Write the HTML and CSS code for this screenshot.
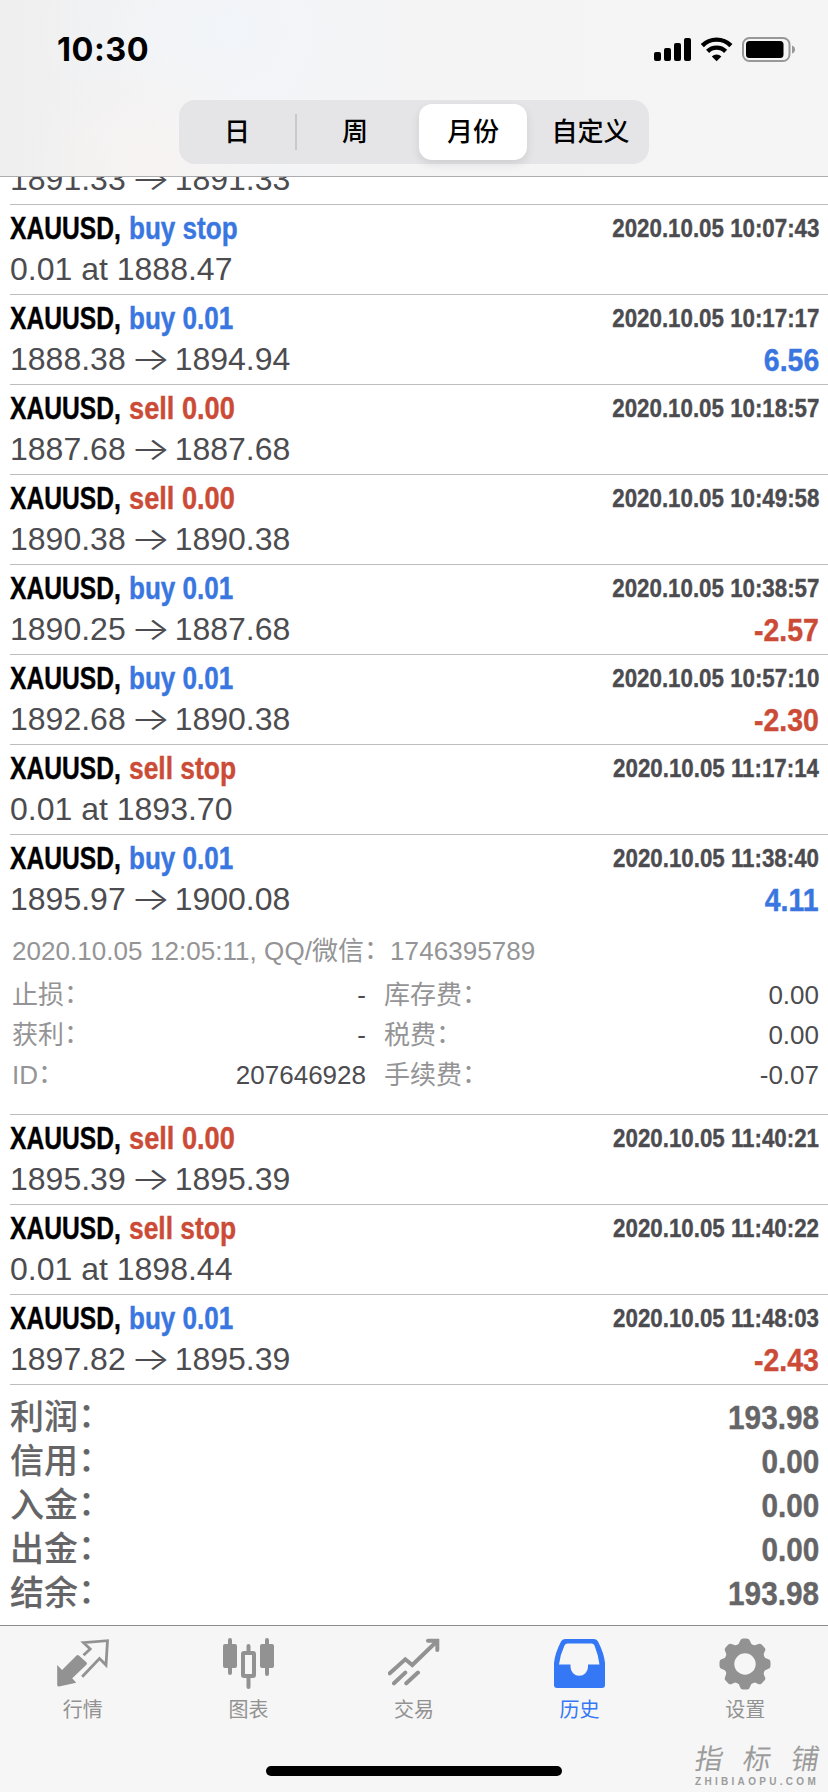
FILE: index.html
```html
<!DOCTYPE html>
<html lang="zh-CN">
<head>
<meta charset="utf-8">
<title>历史</title>
<link rel="stylesheet" href="styles.css">
</head>
<body>
<div class="screen">
  <header class="header">
    <div class="status">
      <span class="clock">10:30</span>
      <svg class="status-icons" width="142" height="26" viewBox="0 0 142 26">
        <rect x="0" y="15" width="7" height="9" rx="2"/>
        <rect x="10" y="11" width="7" height="13" rx="2"/>
        <rect x="20" y="6" width="7" height="18" rx="2"/>
        <rect x="30" y="1" width="7" height="23" rx="2"/>
        <g fill="none" stroke="#000" stroke-width="4.4">
          <path d="M48.3 8.6a20.2 20.2 0 0 1 28.6 0"/>
          <path d="M53.6 14.4a12.6 12.6 0 0 1 18 0"/>
        </g>
        <path d="M57.8 19.4a6.800 6.800 0 0 1 9.600 0l-4.800 4.800z"/>
        <rect x="89" y="1" width="46.500" height="23" rx="6.500" fill="none" stroke="#98989a" stroke-width="2"/>
        <rect x="92" y="4" width="37.500" height="17" rx="3.500"/>
        <path d="M138 8.500q3 1 3 4t-3 4z" fill="#98989a"/>
      </svg>
    </div>
    <div class="segments">
      <span class="segment segment-first">日</span>
      <span class="segment segment-ruled">周</span>
      <span class="segment segment-on">月份</span>
      <span class="segment segment-last">自定义</span>
    </div>
  </header>

  <main class="list">
    <div class="row row-cut"><div class="line line-price"><span class="price">1891.33<i class="arrow">→</i>1891.33</span></div></div>
    <div class="row"><div class="line"><b class="name">XAUUSD,</b><b class="side buy">buy stop</b><b class="time">2020.10.05 10:07:43</b></div><div class="line line-price"><span class="price">0.01 at 1888.47</span></div></div>
    <div class="row"><div class="line"><b class="name">XAUUSD,</b><b class="side buy">buy 0.01</b><b class="time">2020.10.05 10:17:17</b></div><div class="line line-price"><span class="price">1888.38<i class="arrow">→</i>1894.94</span><b class="profit buy">6.56</b></div></div>
    <div class="row"><div class="line"><b class="name">XAUUSD,</b><b class="side sell">sell 0.00</b><b class="time">2020.10.05 10:18:57</b></div><div class="line line-price"><span class="price">1887.68<i class="arrow">→</i>1887.68</span></div></div>
    <div class="row"><div class="line"><b class="name">XAUUSD,</b><b class="side sell">sell 0.00</b><b class="time">2020.10.05 10:49:58</b></div><div class="line line-price"><span class="price">1890.38<i class="arrow">→</i>1890.38</span></div></div>
    <div class="row"><div class="line"><b class="name">XAUUSD,</b><b class="side buy">buy 0.01</b><b class="time">2020.10.05 10:38:57</b></div><div class="line line-price"><span class="price">1890.25<i class="arrow">→</i>1887.68</span><b class="profit sell">-2.57</b></div></div>
    <div class="row"><div class="line"><b class="name">XAUUSD,</b><b class="side buy">buy 0.01</b><b class="time">2020.10.05 10:57:10</b></div><div class="line line-price"><span class="price">1892.68<i class="arrow">→</i>1890.38</span><b class="profit sell">-2.30</b></div></div>
    <div class="row"><div class="line"><b class="name">XAUUSD,</b><b class="side sell stop">sell stop</b><b class="time">2020.10.05 11:17:14</b></div><div class="line line-price"><span class="price">0.01 at 1893.70</span></div></div>
    <div class="row row-open">
      <div class="line"><b class="name">XAUUSD,</b><b class="side buy">buy 0.01</b><b class="time">2020.10.05 11:38:40</b></div><div class="line line-price"><span class="price">1895.97<i class="arrow">→</i>1900.08</span><b class="profit buy">4.11</b></div>
      <div class="comment">2020.10.05 12:05:11, QQ/微信<span class="colon">：</span>1746395789</div>
      <dl class="details">
        <dt>止损<span class="colon">：</span></dt><dd>-</dd><dt>库存费<span class="colon">：</span></dt><dd>0.00</dd>
        <dt>获利<span class="colon">：</span></dt><dd>-</dd><dt>税费<span class="colon">：</span></dt><dd>0.00</dd>
        <dt>ID<span class="colon">：</span></dt><dd>207646928</dd><dt>手续费<span class="colon">：</span></dt><dd>-0.07</dd>
      </dl>
    </div>
    <div class="row"><div class="line"><b class="name">XAUUSD,</b><b class="side sell">sell 0.00</b><b class="time">2020.10.05 11:40:21</b></div><div class="line line-price"><span class="price">1895.39<i class="arrow">→</i>1895.39</span></div></div>
    <div class="row"><div class="line"><b class="name">XAUUSD,</b><b class="side sell stop">sell stop</b><b class="time">2020.10.05 11:40:22</b></div><div class="line line-price"><span class="price">0.01 at 1898.44</span></div></div>
    <div class="row"><div class="line"><b class="name">XAUUSD,</b><b class="side buy">buy 0.01</b><b class="time">2020.10.05 11:48:03</b></div><div class="line line-price"><span class="price">1897.82<i class="arrow">→</i>1895.39</span><b class="profit sell">-2.43</b></div></div>
    <div class="totals">
      <div class="total"><span class="label">利润<span class="colon">：</span></span><b class="sum">193.98</b></div>
      <div class="total"><span class="label">信用<span class="colon">：</span></span><b class="sum">0.00</b></div>
      <div class="total"><span class="label">入金<span class="colon">：</span></span><b class="sum">0.00</b></div>
      <div class="total"><span class="label">出金<span class="colon">：</span></span><b class="sum">0.00</b></div>
      <div class="total"><span class="label">结余<span class="colon">：</span></span><b class="sum">193.98</b></div>
    </div>
  </main>

  <nav class="tabs">
    <a class="tab">
      <svg width="52" height="52" viewBox="0 0 52 52"><path d="M.2 27l4.800 5L19.500 17.500q1.200-1 2.400 0l7.500 6.800q1.200 1.200 0 2.400L15.200 40.300l4 4.400L2 48.500q-1.800 0-1.800-1.500z"/><path d="M26.500 17.300l6.700-6.300-6.700-6.300 24-2-1.500 24.300-6.500-6.500-17.300 18.200" fill="none" stroke="currentColor" stroke-width="2.800"/></svg>
      <span>行情</span>
    </a>
    <a class="tab">
      <svg width="52" height="52" viewBox="0 0 52 52"><rect x="1" y="6" width="14" height="24" rx="2"/><rect x="38" y="6" width="14" height="24" rx="2"/><path d="M8 2v33M45 2v34M26.500 8v7M26.500 40v9" stroke="currentColor" stroke-width="4" stroke-linecap="round"/><rect x="21" y="15" width="11" height="23" rx="1" fill="none" stroke="currentColor" stroke-width="4"/></svg>
      <span>图表</span>
    </a>
    <a class="tab">
      <svg class="outline" width="52" height="52" viewBox="0 0 52 52"><path d="M1.800 35.300l15.500-14 7 5.700L48.900 3.200M40 2.700h9.300V12M6 45.300L17.300 34.600M18.300 45.300L30 34.600"/></svg>
      <span>交易</span>
    </a>
    <a class="tab tab-on">
      <svg width="52" height="52" viewBox="0 0 52 52"><path transform="translate(-1)" fill-rule="evenodd" d="M12 1h29q3 0 4 2.500Q51 15 52 25v22q0 3-3 3H4q-3 0-3-3V25Q2 15 8 3.500 9 1 12 1zM14.500 5.500q-2 0-3 2Q7 17 6 26.500h11.500V29a8.500 8.500 0 0 0 17.500 0v-2.500h11.500Q45 16 41.500 7.500q-1-2-3-2z"/></svg>
      <span>历史</span>
    </a>
    <a class="tab">
      <svg width="52" height="52" viewBox="-26 -26 52 52"><defs><path id="tooth" d="M-9-17q3-2.500 4-6 .7-2.500 3-2.500h4q2.300 0 3 2.500 1 3.500 4 6z"/></defs><circle r="15.700" fill="none" stroke="currentColor" stroke-width="10"/><use href="#tooth"/><use href="#tooth" transform="rotate(45)"/><use href="#tooth" transform="rotate(90)"/><use href="#tooth" transform="rotate(135)"/><use href="#tooth" transform="rotate(180)"/><use href="#tooth" transform="rotate(225)"/><use href="#tooth" transform="rotate(270)"/><use href="#tooth" transform="rotate(315)"/></svg>
      <span>设置</span>
    </a>
  </nav>
  <div class="home-bar"></div>
  <div class="watermark"><span class="brand">指标铺</span><span class="site">ZHIBIAOPU.COM</span></div>
</div>
</body>
</html>
```

FILE: styles.css
```css
* { box-sizing: border-box; }
body { margin: 0; background: #fff; font-family: "Liberation Sans", "Noto Sans CJK SC", sans-serif; }
.screen { position: relative; display: flex; flex-direction: column; width: 828px; height: 1792px; overflow: hidden; }

.header { flex: none; height: 177px; border-bottom: 1px solid #adadaf; background: radial-gradient(circle at 150px 165px, #f7f3f2, transparent 120px), radial-gradient(circle at 230px 30px, #f2f5f9, transparent 190px), linear-gradient(90deg, #efefef, #f4f4f5 30%, #f5f5f6); }
.status { display: flex; justify-content: space-between; align-items: center; height: 100px; padding: 0 32px 0 57px; }
.clock { font: 700 32.5px/40px Inter, sans-serif; letter-spacing: 0.5px; }
.segments { display: flex; width: 470px; height: 64px; margin-left: 179px; padding: 4px; border-radius: 16px; background: #e5e5e7; font-size: 26px; line-height: 56px; font-weight: 500; text-align: center; }
.segment-first { width: 112px; padding-right: 4px; }
.segment-ruled { width: 120px; background: linear-gradient(#c9c9cb, #c9c9cb) 0 50% / 2px 36px no-repeat; }
.segment-on { width: 108px; margin: 0 4px; border-radius: 13px; background: #fff; box-shadow: 0 4px 10px rgba(0, 0, 0, .1); }
.segment-last { flex: 1; padding-left: 5px; }

.list { flex: none; height: 1448px; }
.row { height: 90px; margin-left: 10px; padding: 0 9px 0 0; border-bottom: 1px solid #bdbdc0; color: #4c4c50; }
.row-cut { display: flex; align-items: flex-end; height: 28px; overflow: hidden; }
.row-cut .line-price { margin-bottom: 3px; }
.row-open { height: 280px; }
.line { display: flex; height: 45px; line-height: 46px; }
.line-price { line-height: 38px; height: 41px; }
.name, .side, .time, .profit, .sum { white-space: nowrap; -webkit-text-stroke: .4px currentColor; }
.name { width: 118px; font-size: 32px; color: #000; transform: scaleX(.77); transform-origin: 0 50%; }
.side { margin-left: 1px; font-size: 32px; transform-origin: 0 50%; }
.side.buy { transform: scaleX(.815); }
.side.sell { transform: scaleX(.85); }
.side.stop { transform: scaleX(.825); }
.time { margin-left: auto; font-size: 26px; line-height: 47px; transform: scaleX(.858); transform-origin: 100% 50%; }
.buy { color: #3a76e0; }
.sell { color: #cb4b37; }
.price { font-size: 32px; white-space: nowrap; }
.arrow { display: inline-block; width: 49px; text-align: center; font: 300 32px/38px Inter, sans-serif; transform: scaleX(1.33); }
.profit { margin-left: auto; font-size: 32px; line-height: 40px; transform: scaleX(.89); transform-origin: 100% 50%; }
.colon { vertical-align: .05em; line-height: 1; }
.comment { margin: 8px 0 0 2px; font-size: 26px; line-height: 44px; letter-spacing: .05px; color: #949496; }
.details { display: grid; grid-template-columns: 120px 234px 120px 1fr; margin: 2px 0 0 2px; font-size: 26px; line-height: 40px; }
.details dt { height: 40px; white-space: nowrap; color: #949496; }
.details dt:nth-of-type(even) { padding-left: 18px; }
.details dd { margin: 0; text-align: right; }
.totals { padding: 10px 9px 0 10px; color: #656567; }
.total { display: flex; justify-content: space-between; height: 44px; line-height: 45px; font-size: 34px; }
.label { font-weight: 500; -webkit-text-stroke: .1px currentColor; }
.sum { font-size: 33px; line-height: 46px; transform: scaleX(.9); transform-origin: 100% 50%; }

.tabs { display: flex; flex: none; height: 167px; border-top: 1px solid #8c8c8e; background: #f6f6f6; }
.tab { display: flex; flex: 1; flex-direction: column; align-items: center; padding-top: 12px; color: #929292; font-size: 20px; line-height: 40px; }
.tab svg { display: block; fill: currentColor; }
.tab .outline { fill: none; stroke: currentColor; stroke-width: 4; stroke-linecap: round; }
.tab-on { color: #3478f6; }
.home-bar { position: absolute; left: 266px; top: 1766px; width: 296px; height: 10px; border-radius: 5px; background: #000; }
.watermark { position: absolute; left: 695px; top: 1742px; width: 133px; color: #9c9c9c; }
.brand { display: block; font-size: 28px; font-weight: 400; line-height: 36px; letter-spacing: 20px; white-space: nowrap; transform: skewX(-10deg); }
.site { display: block; margin-top: -1px; font-size: 10px; line-height: 9px; letter-spacing: 3.3px; font-weight: 700; white-space: nowrap; }
```
